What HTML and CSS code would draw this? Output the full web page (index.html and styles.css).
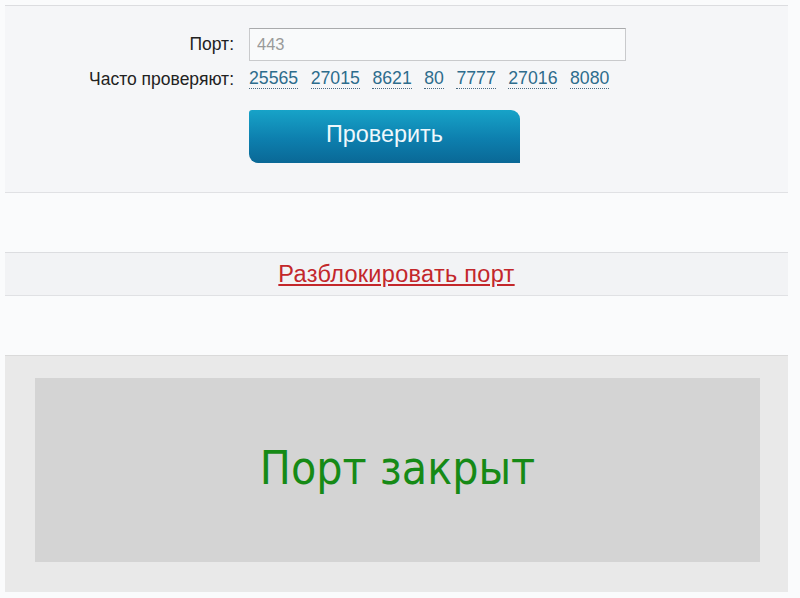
FILE: index.html
```html
<!DOCTYPE html>
<html lang="ru">
<head>
<meta charset="utf-8">
<title>Проверка порта</title>
<link rel="stylesheet" href="styles.css">
</head>
<body>
<div class="page">
  <section class="form-section">
    <div class="form-grid">
      <label class="label" for="port">Порт:</label>
      <div class="field"><input id="port" class="input" type="text" placeholder="443"></div>
      <span class="label">Часто проверяют:</span>
      <div class="ports">
        <a class="port" href="#">25565</a>
        <a class="port" href="#">27015</a>
        <a class="port" href="#">8621</a>
        <a class="port" href="#">80</a>
        <a class="port" href="#">7777</a>
        <a class="port" href="#">27016</a>
        <a class="port" href="#">8080</a>
      </div>
      <span></span>
      <div class="actions"><button class="btn" type="button">Проверить</button></div>
    </div>
  </section>
  <div class="spacer"></div>
  <div class="unlock-row"><a class="unlock" href="#">Разблокировать порт</a></div>
  <div class="spacer"></div>
  <section class="result-section">
    <div class="result-box"><span class="result-text">Порт закрыт</span></div>
  </section>
</div>
</body>
</html>
```
FILE: styles.css
```css
html, body {
  margin: 0;
  padding: 0;
  background: #fafbfc;
  font-family: "Liberation Sans", Arial, sans-serif;
}
.page {
  margin-left: 5px;
  width: 783px;
  padding-top: 5px;
}
.form-section {
  background: #f5f6f8;
  border-top: 1px solid #dcdde0;
  border-bottom: 1px solid #e0e1e4;
  height: 188px;
  box-sizing: border-box;
  padding-top: 22px;
}
.form-grid {
  display: grid;
  grid-template-columns: 229px auto;
  column-gap: 15px;
  row-gap: 6px;
  align-items: center;
}
.label {
  text-align: right;
  font-size: 17.5px;
  color: #222;
}
.input {
  width: 377px;
  height: 33px;
  box-sizing: border-box;
  border: 1px solid #c9cacc;
  border-top-color: #a9aaac;
  background: #f9fafb;
  padding: 0 7px;
  font-family: "Liberation Sans", Arial, sans-serif;
  font-size: 16.5px;
  color: #555;
  outline: none;
}
.input::placeholder { color: #9a9a9a; }
.ports {
  display: flex;
  gap: 12.5px;
  height: 22px;
  align-items: flex-start;
  padding-top: 2px;
}
.port {
  font-size: 17.7px;
  color: #2d6c8c;
  text-decoration: none;
  border-bottom: 1px dotted #4a6a80;
  line-height: 19px;
}
.actions { padding-top: 13px; }
.btn {
  width: 271px;
  height: 53px;
  border: none;
  border-radius: 3px 9px 0 9px;
  background: linear-gradient(#17a3c8, #0d7fae 55%, #0a6896);
  color: #eef8fc;
  font-family: "Liberation Sans", Arial, sans-serif;
  font-size: 23.4px;
  padding: 0 0 4px 0;
  cursor: pointer;
}
.spacer { height: 59px; }
.unlock-row {
  background: #f2f3f5;
  border-top: 1px solid #dcdde0;
  border-bottom: 1px solid #e0e1e4;
  height: 44px;
  box-sizing: border-box;
  display: flex;
  align-items: center;
  justify-content: center;
}
.unlock {
  color: #c3272b;
  font-size: 23.5px;
  text-decoration: underline;
  letter-spacing: 0.3px;
  margin-top: 1px;
}
.result-section {
  background: #e9e9e9;
  border-top: 1px solid #dadada;
  padding: 22px 28px 30px 30px;
}
.result-box {
  background: #d4d4d4;
  height: 184px;
  display: flex;
  align-items: center;
  justify-content: center;
}
.result-text {
  font-family: "DejaVu Sans", Verdana, sans-serif;
  font-stretch: condensed;
  font-size: 46px;
  color: #168a16;
  margin-bottom: 4px;
}
```
